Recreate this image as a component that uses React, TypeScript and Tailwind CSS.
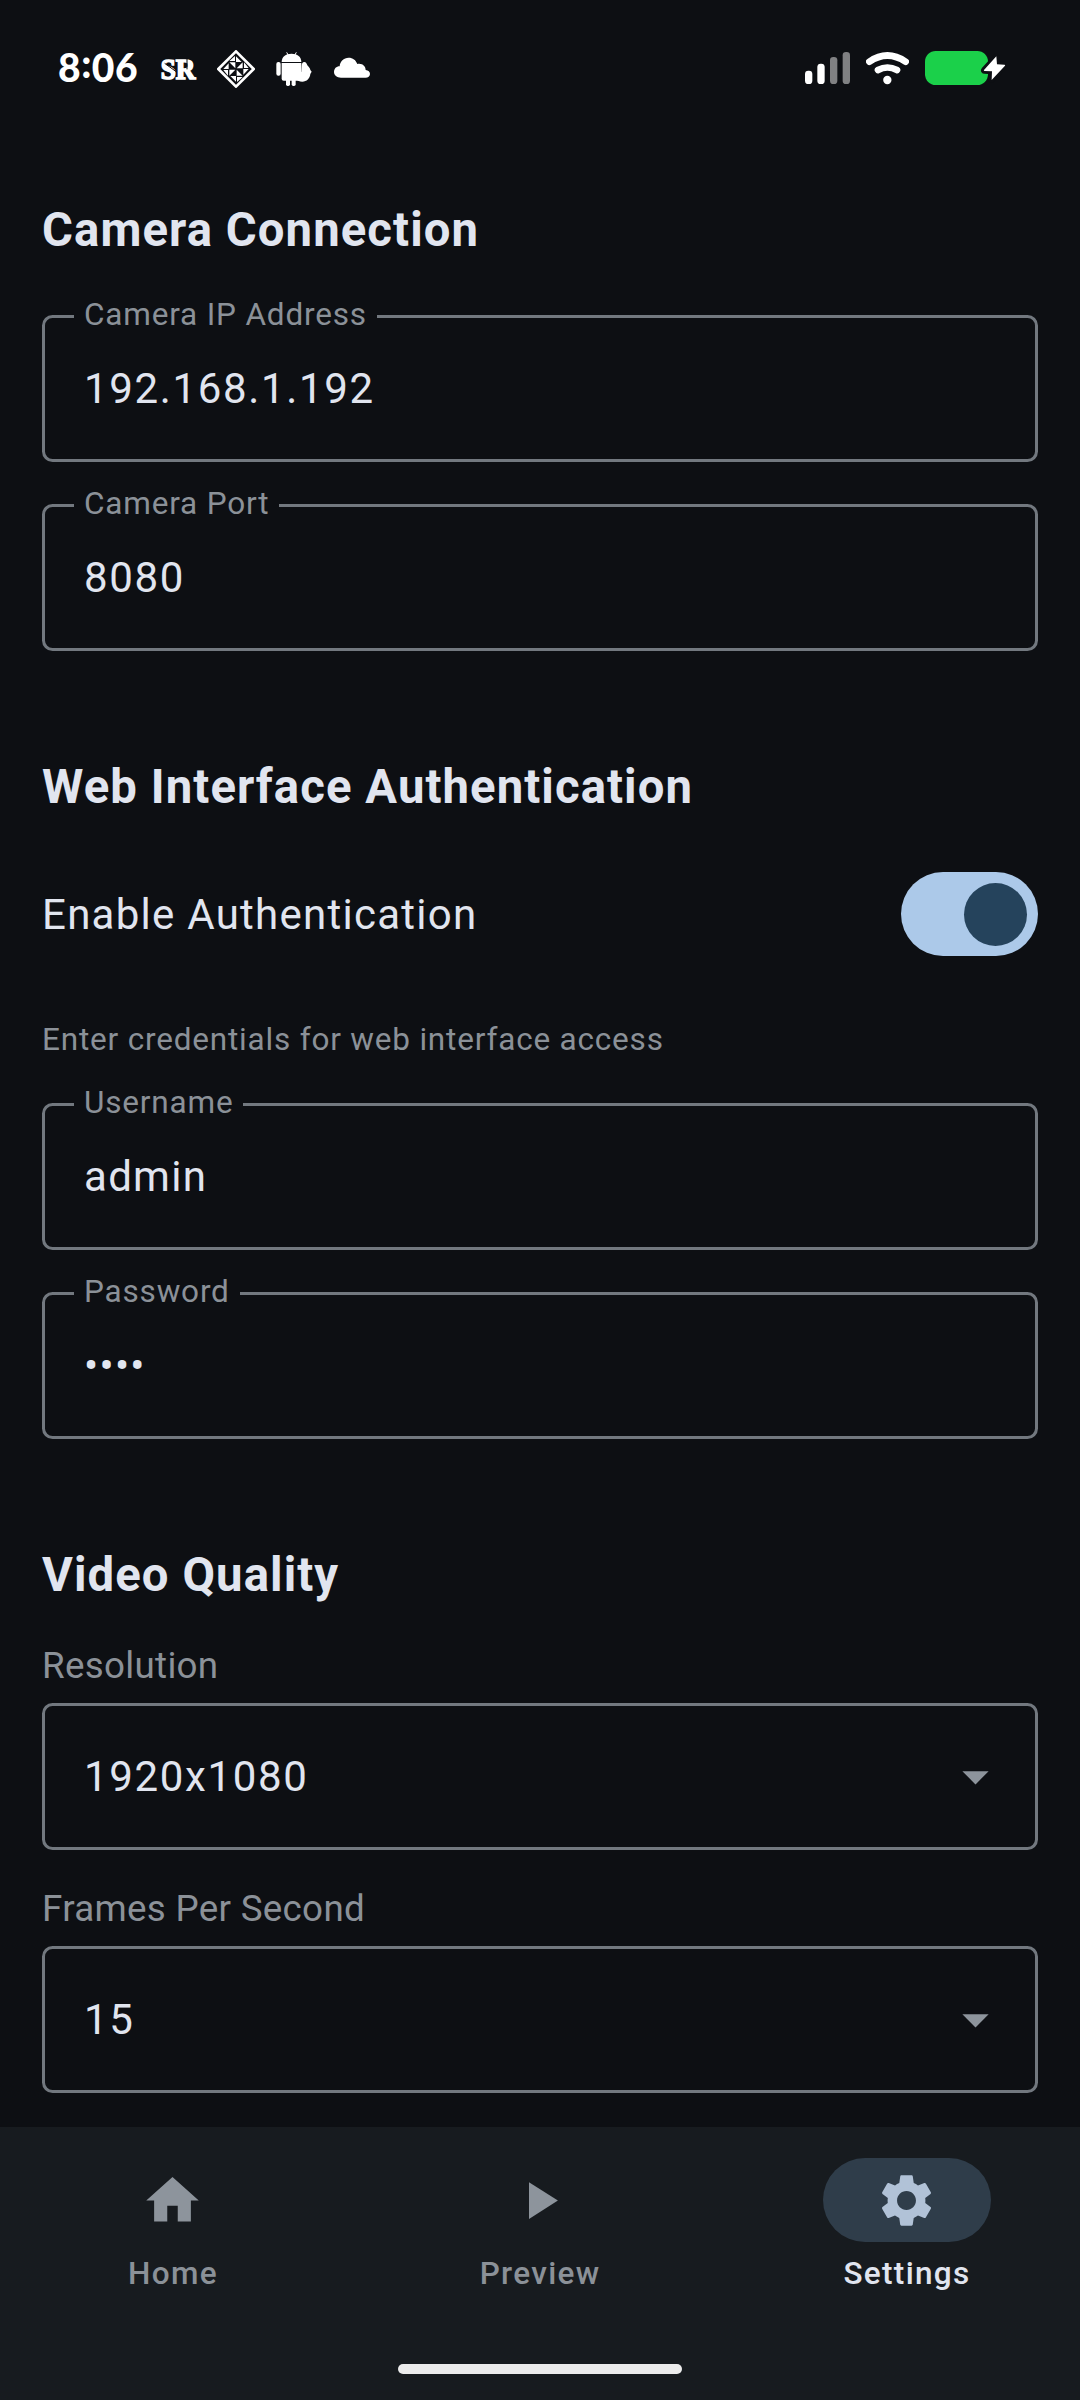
import type { ReactNode } from 'react';

type FieldProps = {
  label: string;
  value: string;
  className?: string;
};

type NavItemProps = {
  label: string;
  active?: boolean;
  children: ReactNode;
};

function SectionTitle({ children, className = '' }: { children: ReactNode; className?: string }) {
  return (
    <h2 className={`h-[63px] text-[47.25px] leading-[65px] font-bold tracking-[1.09px] text-[#e1e5ef] ${className}`}>
      {children}
    </h2>
  );
}

function FieldValue({ value }: { value: string }) {
  const numeric = /^\d/.test(value);

  return (
    <span
      className={`text-[42px] leading-[63px] text-[#e1e5ef] ${numeric ? 'tracking-[1.65px]' : 'tracking-[1.28px]'}`}
    >
      {value}
    </span>
  );
}

function OutlinedField({ label, value, className = '' }: FieldProps) {
  return (
    <div
      className={`relative flex h-[147px] items-center rounded-[10.5px] border-3 border-[#72787f] px-[39px] ${className}`}
    >
      <label className="absolute -top-[24px] left-[29px] bg-[#0d0f13] px-[10px] text-[31.5px] leading-[42px] tracking-[0.82px] text-[#8b9198]">
        {label}
      </label>
      <FieldValue value={value} />
    </div>
  );
}

function SelectField({ label, value, className = '' }: FieldProps) {
  return (
    <div className={className}>
      <p className="h-[52px] text-[36.75px] leading-[52px] tracking-[0.3px] text-[#8b9198]">{label}</p>
      <div className="mt-[11px] flex h-[147px] items-center justify-between rounded-[10.5px] border-3 border-[#72787f] pr-[28.5px] pl-[39px]">
        <FieldValue value={value} />
        <svg viewBox="0 0 24 24" className="size-[63px] fill-[#8d949c]">
          <path d="M7 10l5 5 5-5z" />
        </svg>
      </div>
    </div>
  );
}

function StatusBar() {
  return (
    <header className="flex h-[198px] items-start justify-between pt-[44px] pr-[74px] pl-[58px]">
      <div className="flex items-start">
        <div className="h-[50px] w-[96px] font-[Lato,sans-serif] text-[39px] leading-[47px] font-black tracking-[0.5px] text-white">
          8<span className="relative -top-[4px]">:</span>06
        </div>
        <svg viewBox="342 42 144 150" className="h-[50px] w-[48px]">
          <text
            x="362"
            y="146"
            textLength="104"
            lengthAdjust="spacingAndGlyphs"
            fill="#fff"
            stroke="#fff"
            strokeWidth="5"
            fontFamily="Liberation Serif, serif"
            fontWeight="700"
            fontSize="86"
          >
            SR
          </text>
          <path d="M374 100l36 26M441 86v32" stroke="#0d0f13" strokeWidth="3" />
        </svg>
        <svg viewBox="531 60 114 114" className="mt-[6px] ml-[15px] size-[38px]">
          <path d="M588 64l53 53-53 53-53-53z" fill="none" stroke="#fff" strokeWidth="8" strokeLinejoin="round" />
          <path
            d="M588 79v17h17zM588 155v-17h-17zM550 117h16v-17zM626 117h-16v17zM568 97h18v18zM608 97v18h-18zM568 137v-18h18zM608 137h-18v-18zM612 97v17h14zM564 137v-17h-14zM568 93h17v-15zM608 141h-17v15z"
            fill="#fff"
          />
        </svg>
        <svg viewBox="709 60 108 114" className="mt-[6px] ml-[21px] h-[38px] w-[36px]" fill="#fff">
          <path d="M741 67l5 9M770 67l-5 9" stroke="#fff" strokeWidth="3" />
          <path d="M726 96c0-16 12-25 29.500-25s29.500 9 29.500 25z" />
          <path d="M726 99h59v47q0 6-6 6h-47q-6 0-6-6z" />
          <rect x="710" y="96" width="13" height="41" rx="6" />
          <rect x="739" y="140" width="12" height="28" rx="5" />
          <rect x="756" y="140" width="12" height="28" rx="5" />
          <path d="M786 109c0-7 2-13 8-13 5 0 7 4 9 10 3 4 9 9 9 14l4 5-4 7c-1 13-11 23-24 23-9 0-17-4-21-12l18-18z" />
        </svg>
        <svg viewBox="882 60 108 114" className="mt-[6px] ml-[22px] h-[38px] w-[36px]" fill="#fff">
          <path d="M903 143c-12 0-21-7-21-17s7-17 17-17c1-15 12-26 27-26 12 0 22 7 26 19 15-3 25 7 25 18 8 1 13 6 13 12 0 7-6 11-13 11z" />
        </svg>
      </div>
      <div className="flex items-start pt-[6px]">
        <svg viewBox="75 60 135 114" className="h-[38px] w-[45px]" fill="#fff">
          <rect x="75" y="122" width="22" height="40" rx="10" />
          <rect x="112" y="101" width="22" height="61" rx="10" />
          <rect x="150" y="81" width="22" height="81" rx="10" fill="#808183" />
          <rect x="188" y="66" width="22" height="96" rx="10" fill="#808183" />
        </svg>
        <svg viewBox="258 60 129 114" className="ml-[16px] h-[38px] w-[43px]">
          <path d="M268 95q54-37 109 0M294 120q28-15 57 0" fill="none" stroke="#fff" strokeWidth="20" strokeLinecap="round" />
          <circle cx="322" cy="150" r="12.500" fill="#fff" />
        </svg>
        <svg viewBox="435 60 243 114" className="ml-[16px] h-[38px] w-[81px]">
          <rect x="435" y="63" width="189" height="102" rx="32" fill="#1bd04a" />
          <path
            d="M649 79l-37 41q-2 3 2 3l22 1-1 26 40-43q2-3-2-3l-22-1z"
            fill="#fff"
            stroke="#0d0f13"
            strokeWidth="17"
            strokeLinejoin="round"
            paintOrder="stroke"
          />
        </svg>
      </div>
    </header>
  );
}

function NavItem({ label, active = false, children }: NavItemProps) {
  return (
    <div className="flex flex-1 flex-col items-center">
      <div
        className={`flex h-[84px] w-[168px] items-center justify-center rounded-full pr-[2px] ${
          active ? 'bg-[#2f3d4a]' : ''
        }`}
      >
        <svg viewBox="0 0 24 24" className={`size-[63px] ${active ? 'fill-[#b1c2d7]' : 'fill-[#8d949c]'}`}>
          {children}
        </svg>
      </div>
      <span
        className={`mt-[11px] text-[31.5px] leading-[42px] font-medium tracking-[1.31px] ${
          active ? 'text-[#e1e5ef]' : 'text-[#8b9198]'
        }`}
      >
        {label}
      </span>
    </div>
  );
}

export default function App() {
  return (
    <div className="flex h-[2400px] w-[1080px] flex-col overflow-hidden bg-[#0d0f13] font-[Roboto,sans-serif]">
      <StatusBar />

      <main className="flex-1 px-[42px]">
        <SectionTitle>Camera Connection</SectionTitle>
        <OutlinedField label="Camera IP Address" value="192.168.1.192" className="mt-[54px]" />
        <OutlinedField label="Camera Port" value="8080" className="mt-[42px]" />

        <SectionTitle className="mt-[104px]">Web Interface Authentication</SectionTitle>
        <div className="mt-[54px] flex h-[84px] items-center justify-between">
          <span className="text-[42px] leading-[63px] tracking-[1.26px] text-[#e1e5ef]">Enable Authentication</span>
          <button
            type="button"
            role="switch"
            aria-checked="true"
            aria-label="Enable Authentication"
            className="flex h-[84px] w-[137px] items-center justify-end rounded-full bg-[#acc9e9] pr-[11px]"
          >
            <span className="size-[63px] rounded-full bg-[#25435c]" />
          </button>
        </div>
        <p className="mt-[63px] h-[42px] text-[31.5px] leading-[42px] tracking-[0.81px] text-[#8b9198]">
          Enter credentials for web interface access
        </p>
        <OutlinedField label="Username" value="admin" className="mt-[42px]" />
        <OutlinedField label="Password" value="••••" className="mt-[42px]" />

        <SectionTitle className="mt-[104px]">Video Quality</SectionTitle>
        <SelectField label="Resolution" value="1920x1080" className="mt-[34px]" />
        <SelectField label="Frames Per Second" value="15" className="mt-[33px]" />
      </main>

      <nav className="flex h-[273px] flex-col items-center justify-between bg-[#171b1f] pt-[31px] pb-[26px]">
        <div className="flex w-full gap-[21px]">
          <NavItem label="Home">
            <path d="M10 20v-6h4v6h5v-8h3L12 3 2 12h3v8z" />
          </NavItem>
          <NavItem label="Preview">
            <path d="M8 5v14l11-7z" />
          </NavItem>
          <NavItem label="Settings" active>
            <path d="M19.140 12.940c.04-.3.060-.61.060-.94 0-.32-.02-.64-.07-.94l2.030-1.580c.18-.14.230-.41.120-.61l-1.920-3.320c-.12-.22-.37-.29-.59-.22l-2.390.96c-.5-.38-1.030-.7-1.620-.94l-.36-2.540c-.04-.24-.24-.41-.48-.41h-3.840c-.24 0-.43.170-.47.410l-.36 2.540c-.59.240-1.130.570-1.620.940l-2.390-.96c-.22-.08-.47 0-.59.220L2.740 8.870c-.12.210-.08.470.12.610l2.030 1.580c-.05.3-.09.630-.09.940s.02.640.070.940l-2.030 1.580c-.18.140-.23.410-.12.610l1.920 3.320c.12.220.37.290.59.220l2.390-.96c.5.380 1.030.7 1.620.940l.36 2.540c.05.240.240.410.480.410h3.840c.24 0 .44-.17.470-.41l.36-2.540c.59-.24 1.130-.56 1.620-.94l2.390.96c.22.080.470 0 .59-.22l1.920-3.320c.12-.22.070-.47-.12-.61l-2.010-1.580zM12 15.600c-1.980 0-3.600-1.620-3.600-3.600s1.620-3.600 3.600-3.600 3.600 1.620 3.600 3.600-1.620 3.600-3.600 3.600z" />
          </NavItem>
        </div>
        <div className="h-[10px] w-[284px] rounded-full bg-[#ececec]" />
      </nav>
    </div>
  );
}
